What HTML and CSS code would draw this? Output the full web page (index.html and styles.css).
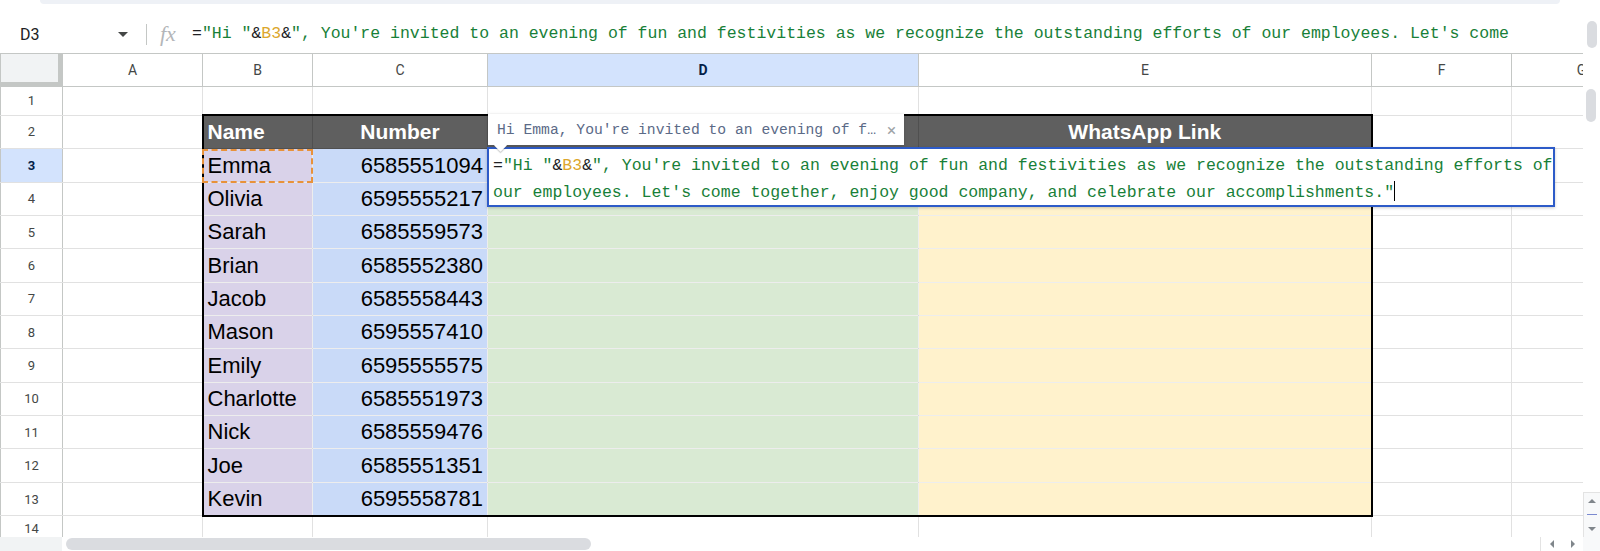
FILE: index.html
```html
<!DOCTYPE html>
<html lang="en">
<head>
    <meta charset="UTF-8">
    <title>WhatsApp Invites - Sheet</title>
    <link rel="stylesheet" href="styles.css">
</head>
<body>
    <div class="toolbar-edge"></div>

    <div class="formula-bar">
        <div class="name-box">
            <span>D3</span>
            <span class="caret-down"></span>
        </div>
        <div class="sep"></div>
        <div class="fx">fx</div>
        <div class="formula-text"><span class="op">=</span>"Hi "<span class="op">&amp;</span><span class="ref">B3</span><span class="op">&amp;</span>", You're invited to an evening of fun and festivities as we recognize the outstanding efforts of our employees. Let's come together, enjoy good company, and celebrate our accomplishments."</div>
        <div class="fb-thumb"></div>
    </div>

    <div class="sheet">
        <div class="sheet-main">
            <div class="viewport">
                <table class="grid">
                    <colgroup>
                        <col class="w-rh"><col class="w-a"><col class="w-b"><col class="w-c"><col class="w-d"><col class="w-e"><col class="w-f"><col class="w-g">
                    </colgroup>
                    <tr class="colhead">
                        <th class="corner"></th><th>A</th><th>B</th><th>C</th><th class="sel">D</th><th>E</th><th>F</th><th>G</th>
                    </tr>
                    <tr class="r1">
                        <th class="rh">1</th><td></td><td></td><td></td><td></td><td></td><td></td><td></td>
                    </tr>
                    <tr class="r">
                        <th class="rh">2</th><td></td><td class="hd b">Name</td><td class="hd c mid">Number</td><td class="hd d mid"></td><td class="hd e mid">WhatsApp Link</td><td></td><td></td>
                    </tr>
                    <tr class="r">
                        <th class="rh sel">3</th><td></td><td class="b">Emma</td><td class="c num">6585551094</td><td class="d"></td><td class="e"></td><td></td><td></td>
                    </tr>
                    <tr class="r">
                        <th class="rh">4</th><td></td><td class="b">Olivia</td><td class="c num">6595555217</td><td class="d"></td><td class="e"></td><td></td><td></td>
                    </tr>
                    <tr class="r">
                        <th class="rh">5</th><td></td><td class="b">Sarah</td><td class="c num">6585559573</td><td class="d"></td><td class="e"></td><td></td><td></td>
                    </tr>
                    <tr class="r">
                        <th class="rh">6</th><td></td><td class="b">Brian</td><td class="c num">6585552380</td><td class="d"></td><td class="e"></td><td></td><td></td>
                    </tr>
                    <tr class="r">
                        <th class="rh">7</th><td></td><td class="b">Jacob</td><td class="c num">6585558443</td><td class="d"></td><td class="e"></td><td></td><td></td>
                    </tr>
                    <tr class="r">
                        <th class="rh">8</th><td></td><td class="b">Mason</td><td class="c num">6595557410</td><td class="d"></td><td class="e"></td><td></td><td></td>
                    </tr>
                    <tr class="r">
                        <th class="rh">9</th><td></td><td class="b">Emily</td><td class="c num">6595555575</td><td class="d"></td><td class="e"></td><td></td><td></td>
                    </tr>
                    <tr class="r">
                        <th class="rh">10</th><td></td><td class="b">Charlotte</td><td class="c num">6585551973</td><td class="d"></td><td class="e"></td><td></td><td></td>
                    </tr>
                    <tr class="r">
                        <th class="rh">11</th><td></td><td class="b">Nick</td><td class="c num">6585559476</td><td class="d"></td><td class="e"></td><td></td><td></td>
                    </tr>
                    <tr class="r">
                        <th class="rh">12</th><td></td><td class="b">Joe</td><td class="c num">6585551351</td><td class="d"></td><td class="e"></td><td></td><td></td>
                    </tr>
                    <tr class="r last">
                        <th class="rh">13</th><td></td><td class="b">Kevin</td><td class="c num">6595558781</td><td class="d"></td><td class="e"></td><td></td><td></td>
                    </tr>
                    <tr class="r14">
                        <th class="rh">14</th><td></td><td></td><td></td><td></td><td></td><td></td><td></td>
                    </tr>
                </table>

                <!-- overlays: range highlight, value preview, in-cell editor -->
                <div class="ref-box"></div>
                <div class="preview">
                    <span>Hi Emma, You're invited to an evening of f…</span>
                    <span class="preview-close">×</span>
                </div>
                <div class="editor">
                    <div class="line"><span class="op">=</span>"Hi "<span class="op">&amp;</span><span class="ref">B3</span><span class="op">&amp;</span>", You're invited to an evening of fun and festivities as we recognize the outstanding efforts of</div>
                    <div class="line">our employees. Let's come together, enjoy good company, and celebrate our accomplishments."<span class="cursor"></span></div>
                </div>
            </div>
            <div class="vscroll">
                <div class="vs-thumb"></div>
                <div class="vs-arrows">
                    <span class="tri-up"></span>
                    <span class="vs-mark"></span>
                    <span class="tri-down"></span>
                </div>
            </div>
        </div>
        <div class="hscroll">
            <div class="hs-corner"></div>
            <div class="hs-thumb"></div>
            <div class="hs-arrows">
                <span class="tri-left"></span>
                <span class="tri-right"></span>
            </div>
            <div class="hs-end"></div>
        </div>
    </div>
</body>
</html>
```

FILE: styles.css
```css
/* Base */
body {
    margin: 0;
    width: 1600px;
    height: 551px;
    overflow: hidden;
    background: #fff;
    font-family: Roboto, "Liberation Sans", sans-serif;
}
.toolbar-edge {
    width: 1520px;
    height: 4px;
    margin-left: 40px;
    background: #eef1f6;
    border-radius: 0 0 8px 8px;
}
/* Formula bar */
.formula-bar {
    height: 49px;
    box-sizing: border-box;
    padding-top: 11px;
    display: flex;
    align-items: center;
}
.name-box {
    width: 146px;
    box-sizing: border-box;
    padding: 0 18px 0 20px;
    display: flex;
    align-items: center;
    justify-content: space-between;
    font-size: 16px;
    color: #202124;
}
.caret-down {
    width: 0;
    height: 0;
    border-left: 5px solid transparent;
    border-right: 5px solid transparent;
    border-top: 5px solid #444746;
}
.sep {
    width: 1px;
    height: 21px;
    background: #c4c7c5;
}
.fx {
    width: 22px;
    margin-left: 13px;
    font-family: "Liberation Serif", serif;
    font-style: italic;
    font-size: 22px;
    line-height: 22px;
    color: #b3b6b9;
}
.formula-text {
    flex: 1;
    margin-left: 10px;
    height: 22px;
    overflow: hidden;
    font-family: "Liberation Mono", monospace;
    font-size: 16.5px;
    line-height: 22px;
    color: #188038;
}
.fb-thumb {
    width: 10px;
    height: 27px;
    margin: 0 3px 0 12px;
    background: #dadce0;
    border-radius: 5px;
}
.op {
    color: #202124;
}
.ref {
    color: #dca72c;
}
/* Sheet area */
.sheet {
    height: 498px;
    display: flex;
    flex-direction: column;
}
.sheet-main {
    height: 484px;
    display: flex;
}
.viewport {
    width: 1583px;
    height: 484px;
    overflow: hidden;
    position: relative;
}
.grid {
    border-collapse: collapse;
    table-layout: fixed;
    width: 1651px;
}
.w-rh { width: 62px; }
.w-a { width: 140px; }
.w-b { width: 110px; }
.w-c { width: 175px; }
.w-d { width: 431px; }
.w-e { width: 453px; }
.w-f { width: 140px; }
.w-g { width: 140px; }
.grid th,
.grid td {
    border: 1px solid #e1e1e1;
    padding: 0 4px 4px 4px;
    overflow: hidden;
    white-space: nowrap;
    vertical-align: bottom;
}
.grid td {
    font-family: "Liberation Sans", Arial, sans-serif;
    font-size: 22px;
    line-height: 25px;
    color: #000;
}
.colhead th {
    height: 32px;
    padding: 0;
    vertical-align: middle;
    font-size: 14px;
    font-weight: 400;
    color: #444746;
    border-color: #c4c7c5;
}
.colhead th.corner {
    background: #f1f3f4;
    box-shadow: inset -4px -4px 0 #c4c7c5;
}
.grid th.rh {
    padding: 0;
    vertical-align: middle;
    font-size: 13px;
    font-weight: 400;
    color: #444746;
    border-color: #e1e1e1 #c4c7c5 #e1e1e1 #c4c7c5;
}
.grid th.sel {
    background: #d3e3fd;
    color: #041e49;
    font-weight: 700;
}
.r1 td { height: 23px; }
.r1 th { height: 27px; }
.r td { height: 28.33px; }
.r th { height: 32.33px; }
.r14 td { height: 20px; }
.r14 th { height: 24px; }
/* Table B2:E13 */
.grid td.b { background: #d9d2e9; border-color: rgba(0, 0, 0, 0.07); border-left: 2px solid #000; }
.grid td.c { background: #c9daf8; border-color: rgba(0, 0, 0, 0.07); }
.grid td.d { background: #d9ead3; border-color: rgba(0, 0, 0, 0.07); }
.grid td.e { background: #fff2cc; border-color: rgba(0, 0, 0, 0.07); border-right: 2px solid #000; }
.grid td.hd {
    background: #5f5f5f;
    color: #fff;
    font-weight: 700;
    font-size: 21px;
    border-color: #505050;
    border-top: 2px solid #000;
}
.grid td.hd.b { border-left: 2px solid #000; }
.grid td.hd.e { border-right: 2px solid #000; }
.grid .last td.b,
.grid .last td.c,
.grid .last td.d,
.grid .last td.e {
    border-bottom: 2px solid #000;
}
.mid { text-align: center; }
.num { text-align: right; }
/* Overlays */
.ref-box {
    position: absolute;
    left: 202px;
    top: 96px;
    width: 111px;
    height: 34px;
    box-sizing: border-box;
    border: 2px dashed #e8923a;
}
.preview {
    position: absolute;
    left: 488px;
    top: 61px;
    width: 416px;
    height: 31px;
    box-sizing: border-box;
    padding: 0 8px 0 9px;
    display: flex;
    align-items: center;
    justify-content: space-between;
    background: #fff;
    box-shadow: 0 1px 3px rgba(60, 64, 67, 0.35);
    font-family: "Liberation Mono", monospace;
    font-size: 14.7px;
    color: #5b6a87;
    z-index: 3;
}
.preview::after {
    content: "";
    position: absolute;
    left: 8px;
    bottom: -5px;
    width: 9px;
    height: 9px;
    background: #fff;
    transform: rotate(45deg);
    box-shadow: 1px 1px 1px rgba(60, 64, 67, 0.25);
}
.preview-close {
    font-family: Roboto, sans-serif;
    font-size: 17px;
    color: #a0a4a8;
}
.editor {
    position: absolute;
    left: 487px;
    top: 94px;
    width: 1068px;
    height: 60px;
    box-sizing: border-box;
    padding: 4px 0 0 4px;
    border: 2px solid #2d5bc8;
    background: #fff;
    box-shadow: 0 1px 3px rgba(0, 0, 0, 0.2);
    font-family: "Liberation Mono", monospace;
    font-size: 16.5px;
    line-height: 26.5px;
    color: #188038;
    white-space: nowrap;
    z-index: 2;
}
.cursor {
    display: inline-block;
    width: 1px;
    height: 20px;
    background: #000;
    vertical-align: -4px;
}
/* Scrollbars */
.vscroll {
    width: 17px;
    display: flex;
    flex-direction: column;
}
.vs-thumb {
    width: 10px;
    height: 33px;
    margin: 36px 0 0 3px;
    background: #dadce0;
    border-radius: 5px;
}
.vs-arrows {
    margin-top: auto;
    height: 45px;
    box-sizing: border-box;
    border-left: 1px solid #e3e3e3;
    border-top: 1px solid #e3e3e3;
    background: #f8f9fa;
    display: flex;
    flex-direction: column;
    align-items: center;
    justify-content: space-around;
}
.vs-mark {
    width: 10px;
    height: 1px;
    background: #7b8ad0;
}
.tri-up, .tri-down, .tri-left, .tri-right {
    width: 0;
    height: 0;
}
.tri-up {
    border-left: 4px solid transparent;
    border-right: 4px solid transparent;
    border-bottom: 4px solid #80868b;
}
.tri-down {
    border-left: 4px solid transparent;
    border-right: 4px solid transparent;
    border-top: 4px solid #80868b;
}
.tri-left {
    border-top: 4px solid transparent;
    border-bottom: 4px solid transparent;
    border-right: 4px solid #80868b;
}
.tri-right {
    border-top: 4px solid transparent;
    border-bottom: 4px solid transparent;
    border-left: 4px solid #80868b;
}
.hscroll {
    height: 14px;
    display: flex;
    align-items: center;
}
.hs-corner {
    width: 62px;
    height: 14px;
    background: #f1f3f4;
}
.hs-thumb {
    width: 525px;
    height: 12px;
    margin-left: 4px;
    background: #dadce0;
    border-radius: 6px;
}
.hs-arrows {
    margin-left: auto;
    width: 43px;
    height: 14px;
    box-sizing: border-box;
    border-left: 1px solid #e3e3e3;
    display: flex;
    align-items: center;
    justify-content: space-around;
}
.hs-end {
    width: 17px;
    height: 14px;
    background: #f8f9fa;
}
```
